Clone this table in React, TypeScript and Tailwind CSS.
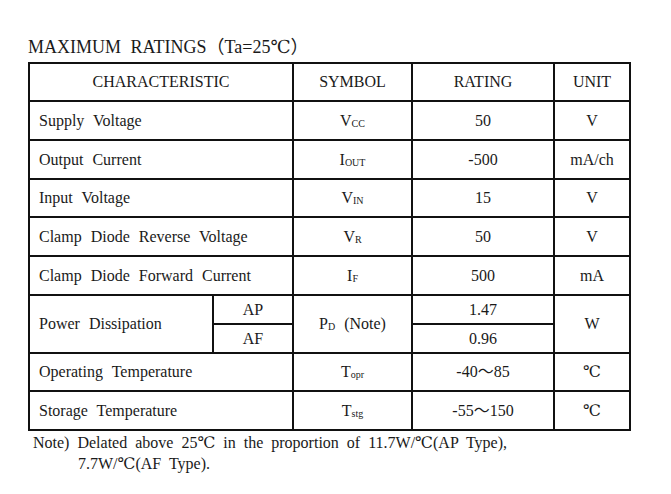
import React from "react";

const F = { fontFamily: '"Liberation Serif", "DejaVu Serif", "Noto Sans CJK KR", serif' };

function Sub({ base, sub }: { base: string; sub: string }) {
  return (
    <span>
      {base}
      <span className="text-[10px] align-[-1px] leading-none">{sub}</span>
    </span>
  );
}

const td = "border-2 border-[#111] p-0 align-middle";

type Row = { c: string; s: React.ReactNode; r: string; u: string; h: string };

export default function App() {
  const rows: Row[] = [
    { c: "Supply Voltage", s: <Sub base="V" sub="CC" />, r: "50", u: "V", h: "h-[39px]" },
    { c: "Output Current", s: <Sub base="I" sub="OUT" />, r: "-500", u: "mA/ch", h: "h-[39px]" },
    { c: "Input Voltage", s: <Sub base="V" sub="IN" />, r: "15", u: "V", h: "h-[38px]" },
    { c: "Clamp Diode Reverse Voltage", s: <Sub base="V" sub="R" />, r: "50", u: "V", h: "h-[39px]" },
    { c: "Clamp Diode Forward Current", s: <Sub base="I" sub="F" />, r: "500", u: "mA", h: "h-[39px]" },
  ];
  const rows2: Row[] = [
    { c: "Operating Temperature", s: <Sub base="T" sub="opr" />, r: "-40～85", u: "℃", h: "h-[38px]" },
    { c: "Storage Temperature", s: <Sub base="T" sub="stg" />, r: "-55～150", u: "℃", h: "h-[39px]" },
  ];
  return (
    <div className="w-[671px] h-[494px] bg-white text-[#1a1a1a] pt-[37px] pl-[28px]" style={F}>
      <div className="text-[18px] leading-[21px] [word-spacing:5px] mb-[4px]">MAXIMUM RATINGS（Ta=25℃）</div>
      <table className="border-collapse text-[16px] leading-[20px] [word-spacing:5px] table-fixed w-[603px]">
        <colgroup>
          <col className="w-[184px]" />
          <col className="w-[80px]" />
          <col className="w-[119px]" />
          <col className="w-[142px]" />
          <col className="w-[76px]" />
        </colgroup>
        <tbody>
          <tr className="h-[38px]">
            <td colSpan={2} className={`${td} text-center`}>CHARACTERISTIC</td>
            <td className={`${td} text-center`}>SYMBOL</td>
            <td className={`${td} text-center`}>RATING</td>
            <td className={`${td} text-center`}>UNIT</td>
          </tr>
          {rows.map((r) => (
            <tr key={r.c} className={r.h}>
              <td colSpan={2} className={`${td} pl-[9px]`}>{r.c}</td>
              <td className={`${td} text-center`}>{r.s}</td>
              <td className={`${td} text-center`}>{r.r}</td>
              <td className={`${td} text-center`}>{r.u}</td>
            </tr>
          ))}
          <tr className="h-[29px]">
            <td rowSpan={2} className={`${td} pl-[9px]`}>Power Dissipation</td>
            <td className={`${td} text-center`}>AP</td>
            <td rowSpan={2} className={`${td} text-center`}>
              <Sub base="P" sub="D" /> (Note)
            </td>
            <td className={`${td} text-center`}>1.47</td>
            <td rowSpan={2} className={`${td} text-center`}>W</td>
          </tr>
          <tr className="h-[29px]">
            <td className={`${td} text-center`}>AF</td>
            <td className={`${td} text-center`}>0.96</td>
          </tr>
          {rows2.map((r) => (
            <tr key={r.c} className={r.h}>
              <td colSpan={2} className={`${td} pl-[9px]`}>{r.c}</td>
              <td className={`${td} text-center`}>{r.s}</td>
              <td className={`${td} text-center`}>{r.r}</td>
              <td className={`${td} text-center`}>{r.u}</td>
            </tr>
          ))}
        </tbody>
      </table>
      <div className="text-[16px] leading-[21px] [word-spacing:4px] pl-[5px] pt-[1px]">
        <div>Note) Delated above 25℃ in the proportion of 11.7W/℃(AP Type),</div>
        <div className="pl-[45px]">7.7W/℃(AF Type).</div>
      </div>
    </div>
  );
}
